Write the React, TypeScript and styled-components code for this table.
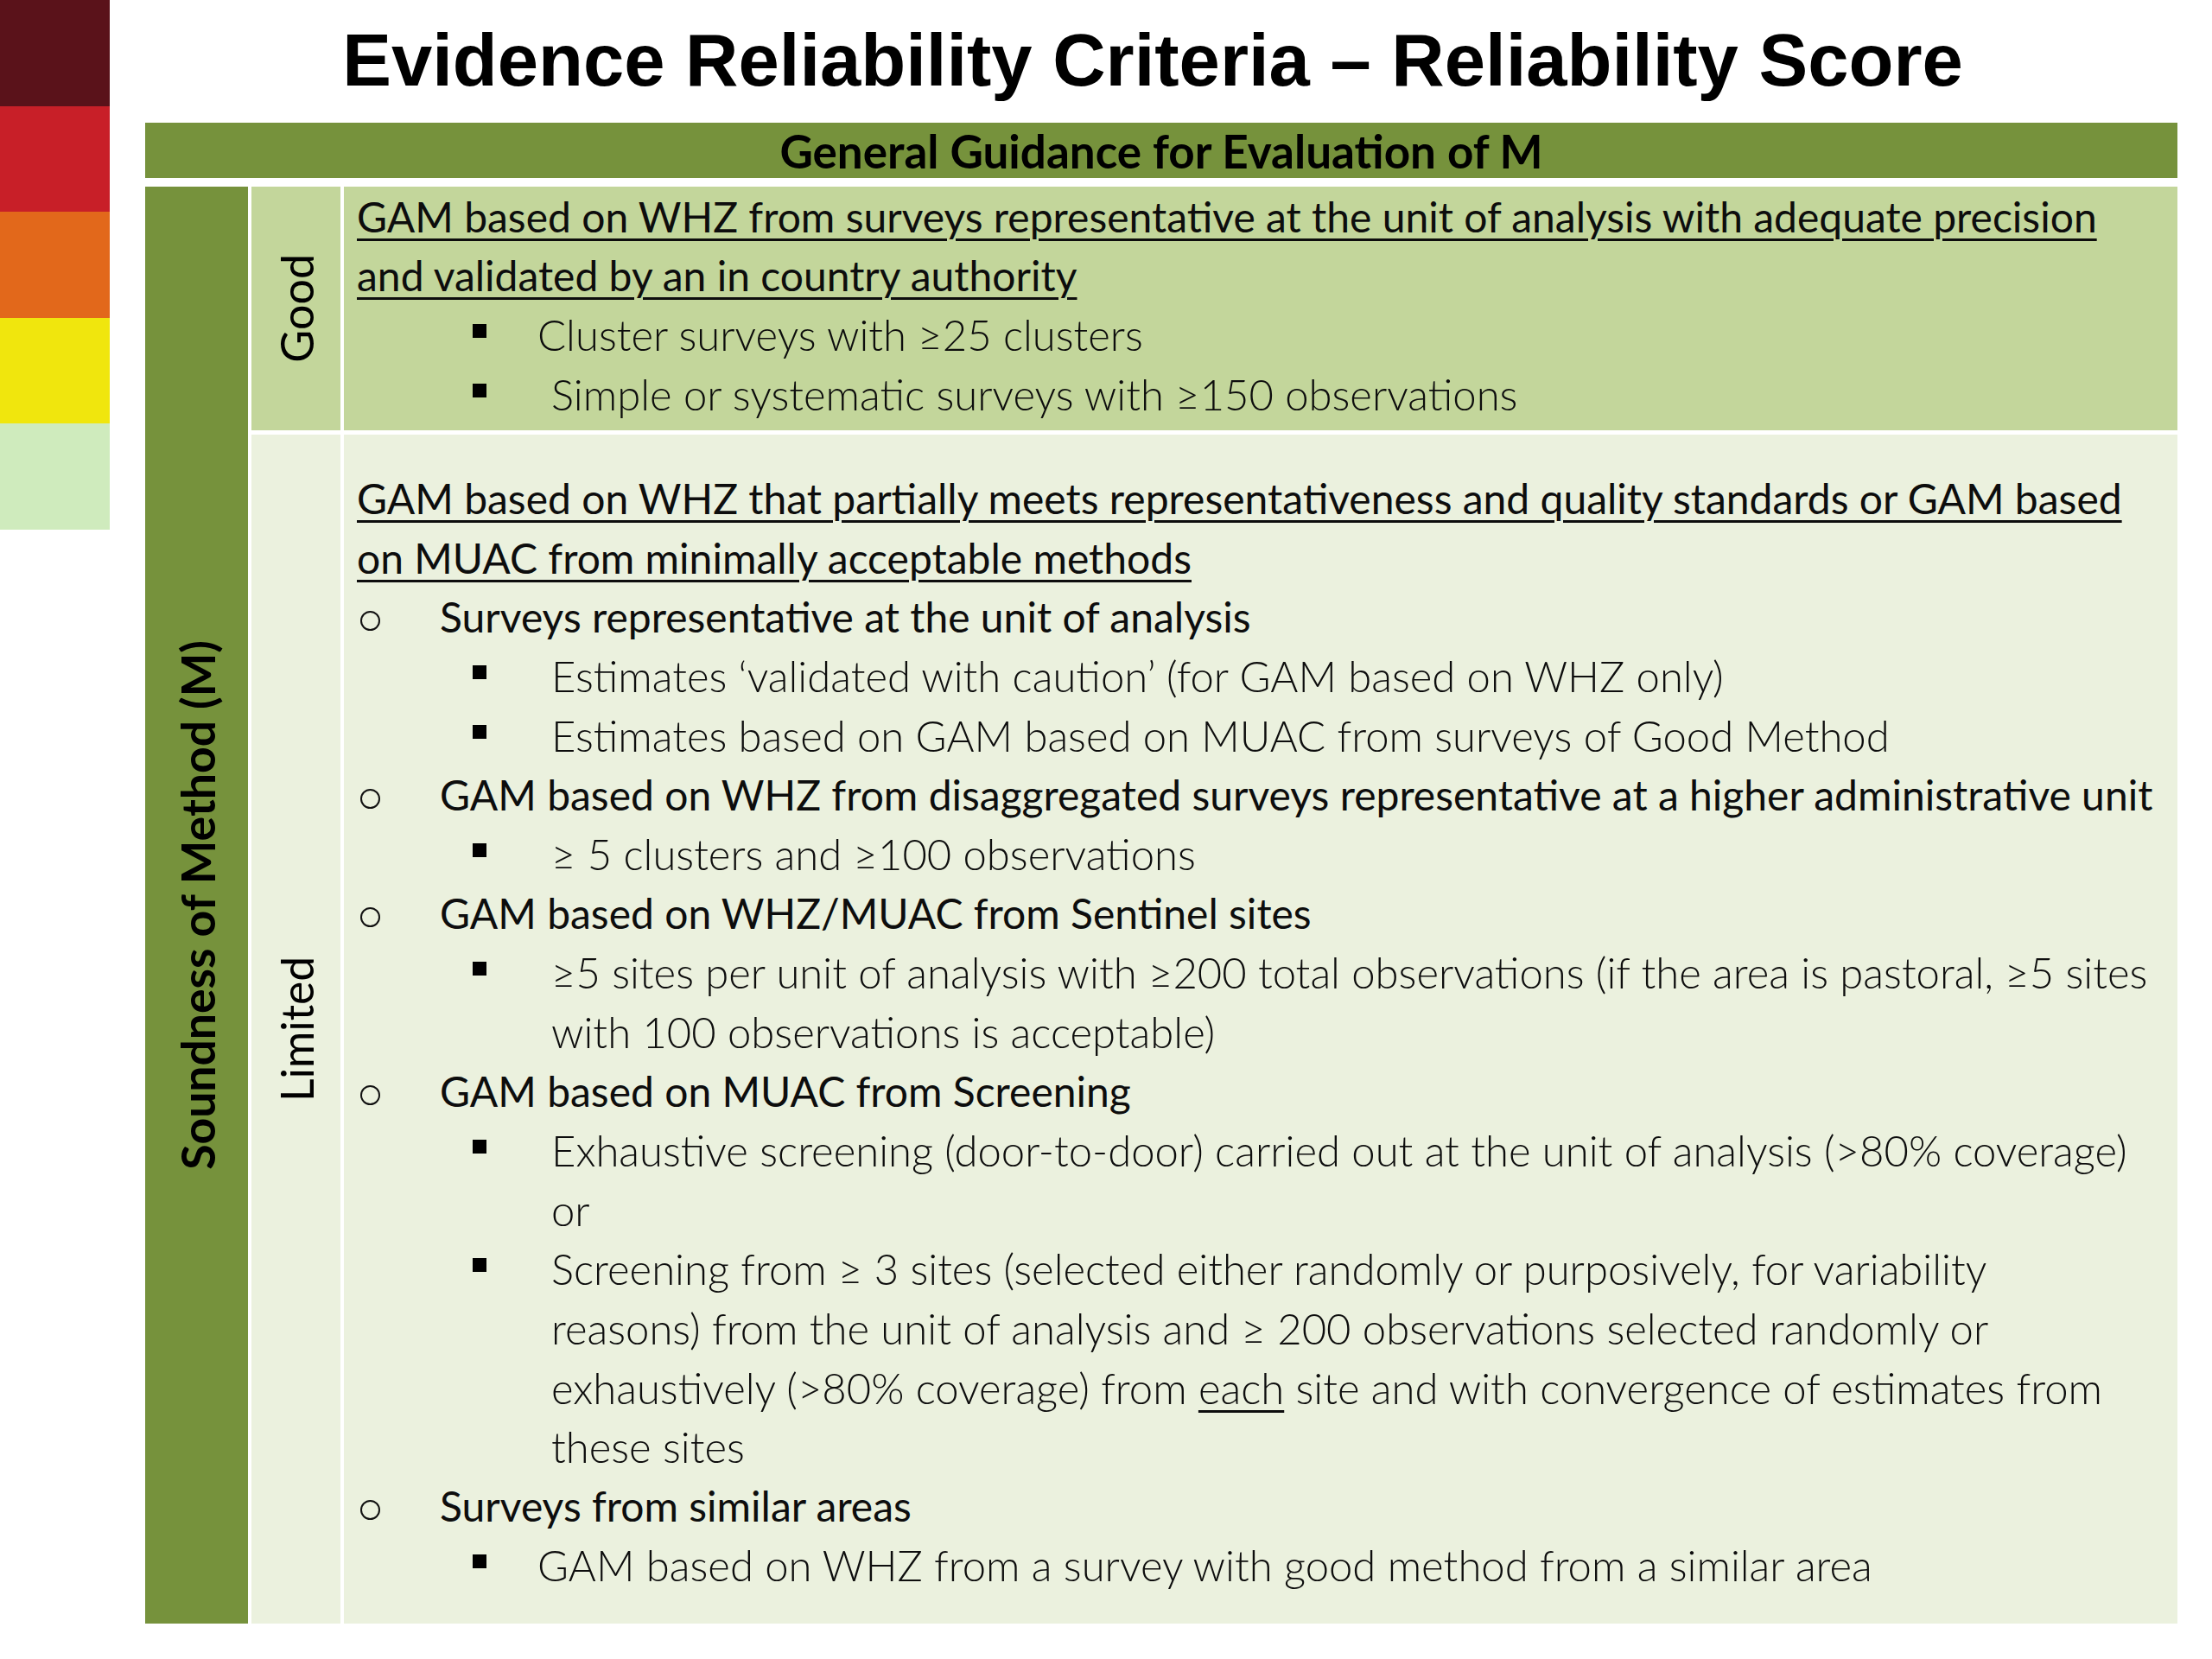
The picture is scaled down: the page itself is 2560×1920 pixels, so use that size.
import React from "react";
import styled, { createGlobalStyle } from "styled-components";

const Global = createGlobalStyle`
  html, body { margin: 0; padding: 0; background: #ffffff; }
  body { font-family: Lato, "Open Sans", sans-serif; color: #0d0d0d; }
`;

const Page = styled.div`
  display: flex;
  align-items: flex-start;
  width: 2560px;
  min-height: 1920px;
  background: #ffffff;
`;

const Strip = styled.div`
  width: 127px;
  flex-shrink: 0;
  display: flex;
  flex-direction: column;
`;

const Swatch = styled.div<{ $c: string }>`
  height: 122.5px;
  background: ${(p) => p.$c};
`;

const Main = styled.div`
  margin-left: 41px;
  width: 2352px;
  display: flex;
  flex-direction: column;
`;

const Title = styled.h1`
  margin: 27px 0 0 0;
  padding-right: 20px;
  height: 85px;
  line-height: 85px;
  font-family: "Liberation Sans", Arial, sans-serif;
  font-weight: 700;
  font-size: 85px;
  text-align: center;
  white-space: nowrap;
  color: #000;
`;

const HeaderBar = styled.div`
  margin-top: 30px;
  height: 64px;
  background: #76923c;
  display: flex;
  align-items: center;
  justify-content: center;
  font-family: Lato, sans-serif;
  font-weight: 700;
  font-size: 53px;
  color: #000;
  white-space: nowrap;
`;

const Body = styled.div`
  margin-top: 10px;
  display: grid;
  grid-template-columns: 119px 103px 1fr;
  column-gap: 4px;
  row-gap: 5px;
`;

const SideCell = styled.div`
  grid-row: 1 / span 2;
  background: #76923c;
  display: flex;
  align-items: center;
  justify-content: center;
`;

const VerticalText = styled.span<{ $size: number; $weight: number }>`
  writing-mode: vertical-rl;
  transform: rotate(180deg);
  font-family: Lato, sans-serif;
  font-size: ${(p) => p.$size}px;
  font-weight: ${(p) => p.$weight};
  white-space: nowrap;
  color: #000;
`;

const RatingCell = styled.div<{ $bg: string }>`
  background: ${(p) => p.$bg};
  display: flex;
  align-items: center;
  justify-content: center;
`;

const ContentCell = styled.div<{ $bg: string; $pt: number; $pb: number }>`
  background: ${(p) => p.$bg};
  padding: ${(p) => p.$pt}px 0 ${(p) => p.$pb}px 15px;
  display: flex;
  flex-direction: column;
`;

const Line = styled.div<{ $pl: number; $light: boolean }>`
  display: flex;
  align-items: center;
  height: 68.6px;
  padding-left: ${(p) => p.$pl}px;
  font-family: Lato, sans-serif;
  font-size: ${(p) => (p.$light ? 49 : 48)}px;
  font-weight: ${(p) => (p.$light ? 300 : 400)};
  white-space: nowrap;
  color: #0d0d0d;
`;

const MarkerSlot = styled.span<{ $w: number }>`
  width: ${(p) => p.$w}px;
  flex-shrink: 0;
  display: flex;
  align-items: center;
`;

const Square = styled.span`
  width: 16px;
  height: 16px;
  background: #000;
  margin-bottom: 8px;
`;

const Circle = styled.span`
  box-sizing: border-box;
  width: 23px;
  height: 23px;
  border: 2px solid #111;
  border-radius: 50%;
  margin-top: 10px;
`;

const Underlined = styled.span`
  text-decoration: underline;
  text-decoration-thickness: 3px;
  text-underline-offset: 7px;
`;

type Kind = "h" | "l1" | "l2" | "cont";
type Spec = { kind: Kind; text: React.ReactNode; at?: number };

const Row: React.FC<{ spec: Spec }> = ({ spec }) => {
  const { kind, text, at = 225 } = spec;
  if (kind === "h") {
    return (
      <Line $pl={0} $light={false}>
        <Underlined>{text}</Underlined>
      </Line>
    );
  }
  if (kind === "l1") {
    return (
      <Line $pl={4} $light={false}>
        <MarkerSlot $w={92}>
          <Circle />
        </MarkerSlot>
        <span>{text}</span>
      </Line>
    );
  }
  if (kind === "l2") {
    return (
      <Line $pl={134} $light>
        <MarkerSlot $w={at - 134}>
          <Square />
        </MarkerSlot>
        <span>{text}</span>
      </Line>
    );
  }
  return (
    <Line $pl={225} $light>
      <span>{text}</span>
    </Line>
  );
};

const goodLines: Spec[] = [
  { kind: "h", text: "GAM based on WHZ from surveys representative at the unit of analysis with adequate precision" },
  { kind: "h", text: "and validated by an in country authority" },
  { kind: "l2", text: "Cluster surveys with ≥25 clusters", at: 209 },
  { kind: "l2", text: "Simple or systematic surveys with ≥150 observations", at: 225 },
];

const limitedLines: Spec[] = [
  { kind: "h", text: "GAM based on WHZ that partially meets representativeness and quality standards or GAM based" },
  { kind: "h", text: "on MUAC from minimally acceptable methods" },
  { kind: "l1", text: "Surveys representative at the unit of analysis" },
  { kind: "l2", text: "Estimates ‘validated with caution’ (for GAM based on WHZ only)" },
  { kind: "l2", text: "Estimates based on GAM based on MUAC from surveys of Good Method" },
  { kind: "l1", text: "GAM based on WHZ from disaggregated surveys representative at a higher administrative unit" },
  { kind: "l2", text: "≥ 5 clusters and ≥100 observations" },
  { kind: "l1", text: "GAM based on WHZ/MUAC from Sentinel sites" },
  { kind: "l2", text: "≥5 sites per unit of analysis with ≥200 total observations (if the area is pastoral, ≥5 sites" },
  { kind: "cont", text: "with 100 observations is acceptable)" },
  { kind: "l1", text: "GAM based on MUAC from Screening" },
  { kind: "l2", text: "Exhaustive screening (door-to-door) carried out at the unit of analysis (>80% coverage)" },
  { kind: "cont", text: "or" },
  { kind: "l2", text: "Screening from ≥ 3 sites (selected either randomly or purposively, for variability" },
  { kind: "cont", text: "reasons) from the unit of analysis and ≥ 200 observations selected randomly or" },
  {
    kind: "cont",
    text: (
      <>
        exhaustively (&gt;80% coverage) from <Underlined>each</Underlined> site and with convergence of estimates from
      </>
    ),
  },
  { kind: "cont", text: "these sites" },
  { kind: "l1", text: "Surveys from similar areas" },
  { kind: "l2", text: "GAM based on WHZ from a survey with good method from a similar area", at: 209 },
];

const swatches = ["#5a121a", "#c81f28", "#e2681b", "#f0e60d", "#cfebbd"];

export default function App() {
  return (
    <>
      <Global />
      <Page>
        <Strip>
          {swatches.map((c) => (
            <Swatch key={c} $c={c} />
          ))}
        </Strip>
        <Main>
          <Title>Evidence Reliability Criteria – Reliability Score</Title>
          <HeaderBar>General Guidance for Evaluation of M</HeaderBar>
          <Body>
            <SideCell>
              <VerticalText $size={53.5} $weight={700}>
                Soundness of Method (M)
              </VerticalText>
            </SideCell>
            <RatingCell $bg="#c3d69b">
              <VerticalText $size={52} $weight={400}>
                Good
              </VerticalText>
            </RatingCell>
            <ContentCell $bg="#c3d69b" $pt={0} $pb={8}>
              {goodLines.map((s, i) => (
                <Row key={i} spec={s} />
              ))}
            </ContentCell>
            <RatingCell $bg="#ebf1de">
              <VerticalText $size={51.5} $weight={400}>
                Limited
              </VerticalText>
            </RatingCell>
            <ContentCell $bg="#ebf1de" $pt={39} $pb={33}>
              {limitedLines.map((s, i) => (
                <Row key={i} spec={s} />
              ))}
            </ContentCell>
          </Body>
        </Main>
      </Page>
    </>
  );
}
